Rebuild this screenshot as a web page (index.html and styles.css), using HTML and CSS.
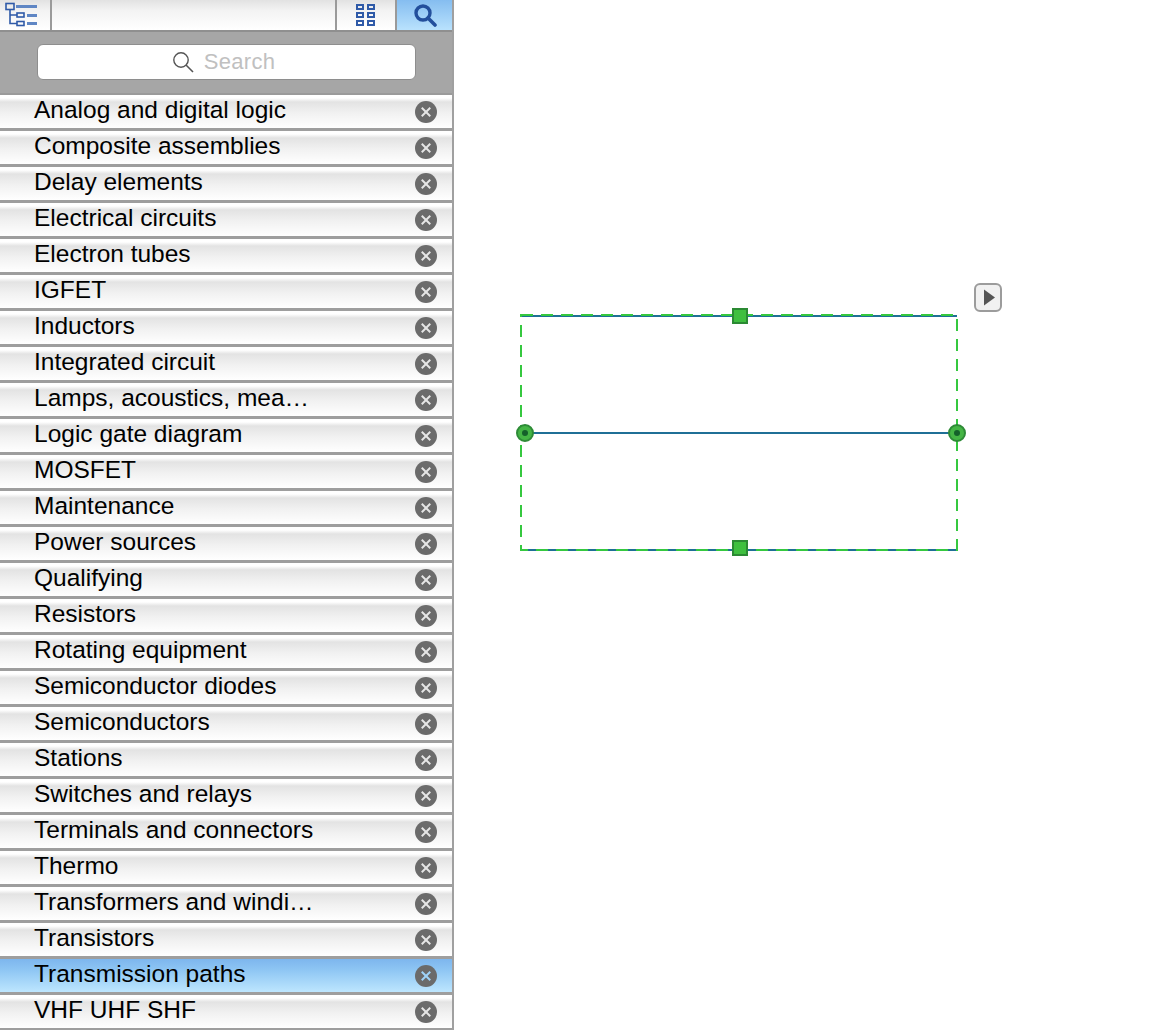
FILE: index.html
```html
<!DOCTYPE html>
<html lang="en">
<head>
<meta charset="utf-8">
<title>Libraries</title>
<link rel="stylesheet" href="styles.css">
</head>
<body>
<div class="app">
  <aside class="sidebar">
    <div class="toolbar">
      <div class="tool tool-tree">
        <svg width="38" height="30" viewBox="0 0 38 30"><g fill="none" stroke="#2f5aa8" stroke-width="1.6"><rect x="5" y="3.5" width="8" height="6"/><rect x="16" y="13" width="7" height="4"/><rect x="16" y="21.5" width="7" height="4"/><path d="M9 10v13.5h7M9 15h7"/></g><g fill="#5f86c4"><rect x="15" y="5" width="21" height="3"/><rect x="26" y="14" width="10" height="3"/><rect x="26" y="22" width="10" height="3"/></g></svg>
      </div>
      <div class="tool tool-spacer"></div>
      <div class="tool tool-grid">
        <svg width="22" height="24" viewBox="0 0 22 24"><g fill="none" stroke="#2f5aa8" stroke-width="2"><rect x="2" y="2" width="6" height="4"/><rect x="13" y="2" width="6" height="4"/><rect x="2" y="10" width="6" height="4"/><rect x="13" y="10" width="6" height="4"/><rect x="2" y="18" width="6" height="4"/><rect x="13" y="18" width="6" height="4"/></g></svg>
      </div>
      <div class="tool tool-search">
        <svg width="26" height="24" viewBox="0 0 26 24"><circle cx="11" cy="10" r="7" fill="none" stroke="#234f9c" stroke-width="3.4"/><path d="M16 15l7 7" stroke="#234f9c" stroke-width="3.6" stroke-linecap="round"/></svg>
      </div>
    </div>
    <div class="search-band">
      <div class="search-field">
        <svg width="22" height="22" viewBox="0 0 22 22"><circle cx="9" cy="9" r="7.2" fill="none" stroke="#555" stroke-width="1.4"/><path d="M14 14l7 7" stroke="#555" stroke-width="1.6"/></svg>
        <span class="search-text">Search</span>
      </div>
    </div>
    <ul class="list">
      <li class="row"><span class="label">Analog and digital logic</span><span class="close"></span></li>
      <li class="row"><span class="label">Composite assemblies</span><span class="close"></span></li>
      <li class="row"><span class="label">Delay elements</span><span class="close"></span></li>
      <li class="row"><span class="label">Electrical circuits</span><span class="close"></span></li>
      <li class="row"><span class="label">Electron tubes</span><span class="close"></span></li>
      <li class="row"><span class="label">IGFET</span><span class="close"></span></li>
      <li class="row"><span class="label">Inductors</span><span class="close"></span></li>
      <li class="row"><span class="label">Integrated circuit</span><span class="close"></span></li>
      <li class="row"><span class="label">Lamps, acoustics, mea…</span><span class="close"></span></li>
      <li class="row"><span class="label">Logic gate diagram</span><span class="close"></span></li>
      <li class="row"><span class="label">MOSFET</span><span class="close"></span></li>
      <li class="row"><span class="label">Maintenance</span><span class="close"></span></li>
      <li class="row"><span class="label">Power sources</span><span class="close"></span></li>
      <li class="row"><span class="label">Qualifying</span><span class="close"></span></li>
      <li class="row"><span class="label">Resistors</span><span class="close"></span></li>
      <li class="row"><span class="label">Rotating equipment</span><span class="close"></span></li>
      <li class="row"><span class="label">Semiconductor diodes</span><span class="close"></span></li>
      <li class="row"><span class="label">Semiconductors</span><span class="close"></span></li>
      <li class="row"><span class="label">Stations</span><span class="close"></span></li>
      <li class="row"><span class="label">Switches and relays</span><span class="close"></span></li>
      <li class="row"><span class="label">Terminals and connectors</span><span class="close"></span></li>
      <li class="row"><span class="label">Thermo</span><span class="close"></span></li>
      <li class="row"><span class="label">Transformers and windi…</span><span class="close"></span></li>
      <li class="row"><span class="label">Transistors</span><span class="close"></span></li>
      <li class="row selected"><span class="label">Transmission paths</span><span class="close"></span></li>
      <li class="row"><span class="label">VHF UHF SHF</span><span class="close"></span></li>
    </ul>
  </aside>
  <main class="canvas">
    <svg class="drawing" width="700" height="1030" viewBox="454 0 700 1030">
      <g fill="none">
        <path d="M521 316H957M521 433H957M521 550H957" stroke="#1f6f96" stroke-width="2"/>
        <rect x="521" y="315" width="436" height="235" stroke="#35c83f" stroke-width="2" stroke-dasharray="12 8"/>
      </g>
      <rect x="733" y="309" width="14" height="14" fill="#3fbf3f" stroke="#2b8a33" stroke-width="2"/>
      <rect x="733" y="541" width="14" height="14" fill="#3fbf3f" stroke="#2b8a33" stroke-width="2"/>
      <g fill="#45b545" stroke="#2e8b37" stroke-width="2">
        <circle cx="525" cy="433" r="8"/>
        <circle cx="957" cy="433" r="8"/>
      </g>
      <circle cx="525" cy="433" r="3" fill="#14612a"/>
      <circle cx="957" cy="433" r="3" fill="#14612a"/>
      <rect x="975" y="284" width="26" height="27" rx="5" fill="#f1f1f1" stroke="#9c9c9c" stroke-width="2"/>
      <path d="M984 289.500L995 297.500L984 305.500Z" fill="#555"/>
    </svg>
  </main>
</div>
</body>
</html>
```

FILE: styles.css
```css
* { box-sizing: border-box; }
html, body { margin: 0; padding: 0; height: 100%; overflow: hidden; background: #fff; }
body { font-family: "Liberation Sans", Arial, sans-serif; }
.app { display: flex; width: 1154px; height: 1030px; overflow: hidden; }
.sidebar { width: 454px; flex: none; border-right: 2px solid #a0a0a0; display: flex; flex-direction: column; height: 1030px; overflow: hidden; }
.toolbar { display: flex; height: 32px; flex: none; border-bottom: 2px solid #8f8f8f; }
.tool { display: flex; align-items: center; justify-content: center; background: linear-gradient(#e2e2e2, #f3f3f3 35%, #ffffff); border-right: 2px solid #9a9a9a; }
.tool-tree { width: 52px; justify-content: flex-start; padding-left: 1px; }
.tool-spacer { flex: 1; }
.tool-grid { width: 60px; }
.tool-search { width: 55px; border-right: 0; background: linear-gradient(#85bdf0, #b9e2fd); }
.search-band { height: 63px; flex: none; background: #a6a6a6; display: flex; align-items: center; justify-content: center; padding-bottom: 1px; border-bottom: 2px solid #9a9a9a; }
.search-field { width: 379px; height: 36px; background: #fff; border-radius: 6px; border: 1px solid #8e8e8e; display: flex; align-items: center; justify-content: center; gap: 10px; padding-right: 5px; }
.search-text { color: #c0c0c0; font-size: 22px; letter-spacing: .3px; }
.list { list-style: none; margin: 0; padding: 0; flex: none; }
.row { height: 36px; display: flex; align-items: center; justify-content: space-between; padding: 0 15px 3px 34px; background: linear-gradient(#fff, #fff 3px, #e3e3e3 7px, #f1f1f1 18px, #fff 33px); border-bottom: 3px solid #9e9e9e; }
.row.selected { background: linear-gradient(#7db6ee, #8cc4f3 30%, #bde6fe); }
.label { font-size: 24.500px; color: #000; white-space: nowrap; line-height: 32px; }
.close { position: relative; width: 22px; height: 22px; border-radius: 50%; background: #6b6b6b; margin-top: 3px; }
.close::before, .close::after { content: ""; position: absolute; left: 5px; top: 10px; width: 12px; height: 2px; background: #e6e6e6; transform: rotate(45deg); }
.close::after { transform: rotate(-45deg); }
.selected .close::before, .selected .close::after { background: #9fd3f8; }
.canvas { flex: 1; background: #fff; }
.drawing { display: block; }
```
